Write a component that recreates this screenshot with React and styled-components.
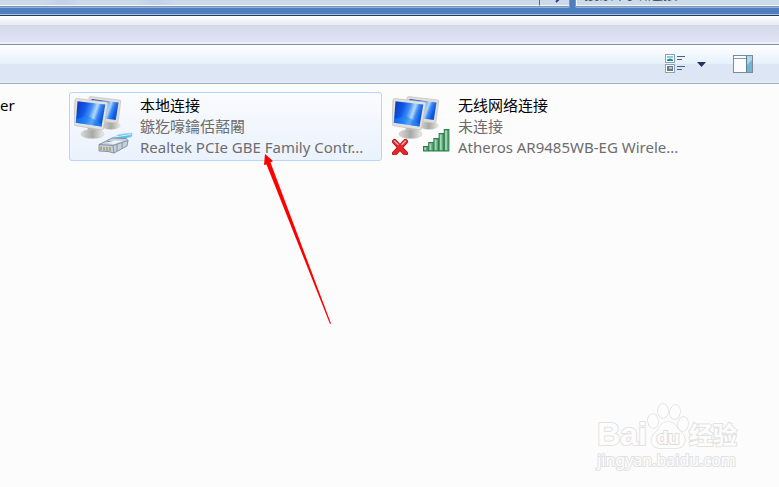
import { useId } from 'react';
import styled, { createGlobalStyle } from 'styled-components';

const connections = [
  {
    id: 'lan',
    name: '本地连接',
    status: '鏃犵嚎鑰佸嚭闂',
    device: 'Realtek PCIe GBE Family Contr...',
    active: true,
  },
  {
    id: 'wifi',
    name: '无线网络连接',
    status: '未连接',
    device: 'Atheros AR9485WB-EG Wirele...',
    active: false,
  },
];

const GlobalStyle = createGlobalStyle`
  * {
    box-sizing: border-box;
  }
  body {
    margin: 0;
    background: #fcfcfc;
    font-family: 'Noto Sans', 'Noto Sans CJK SC', sans-serif;
    font-size: 15px;
  }
  button, input {
    font: inherit;
  }
`;

const Page = styled.div`
  position: relative;
  min-height: 100vh;
  overflow: hidden;
`;

const TitleBar = styled.header`
  display: flex;
  align-items: flex-end;
  gap: 5px;
  height: 16px;
  padding-bottom: 6px;
  overflow: hidden;
  background: #4e7dc0;
  border-bottom: 1px solid #293b52;
  box-shadow: inset 0 -1px #a4c1e4;
`;

const AddressBar = styled.div`
  flex: 1;
  display: flex;
  height: 26px;
  border: 1px solid #8196b4;
  border-left: 0;
  box-shadow: 0 1px #8fb1dc;
  background:
    radial-gradient(circle at 62px 22px, #b9c6e880, transparent 18px),
    radial-gradient(circle at 155px 22px, #b9c6e880, transparent 18px),
    #cbd9ea;
  border-bottom-right-radius: 2px;
  margin-bottom: 2px;
`;

const AddressInput = styled.input`
  flex: 1;
  min-width: 0;
  padding: 0 8px;
  border: 0;
  border-bottom: 1px solid #f4f8fc;
  background: transparent;
`;

const RefreshButton = styled.button`
  display: flex;
  align-items: flex-end;
  justify-content: center;
  width: 30px;
  padding: 0 0 2px 6px;
  border: 0;
  border-left: 1px solid #5d6c80;
  border-bottom: 1px solid #f4f8fc;
  background: transparent;
`;

const SearchInput = styled.input`
  width: 204px;
  height: 26px;
  margin-bottom: 2px;
  padding: 0 8px 2px;
  border: 1px solid #8196b4;
  border-right: 0;
  border-bottom-left-radius: 2px;
  background: #ccdbea;
  box-shadow: inset 1px -1px #f4f8fc, 0 1px #8fb1dc;
  line-height: 20px;

  &::placeholder {
    color: #4d5560;
    opacity: 1;
  }
`;

const MenuBar = styled.div`
  height: 29px;
  background: linear-gradient(#ffffff, #e6eaf2 9px, #d3d8eb 9px, #e0e4f4 26px, #e8f0fa 26px);
  border-bottom: 1px solid #8791a3;
`;

const Toolbar = styled.div`
  display: flex;
  align-items: center;
  justify-content: flex-end;
  height: 39px;
  padding-right: 26px;
  background: linear-gradient(#ffffff, #e5f1fb 19px, #dce6f4 19px, #dce6f4 36px, #e4eef9 37px);
  border-bottom: 1px solid #a0afc3;
`;

const ToolButton = styled.button`
  display: flex;
  margin-left: ${props => props.$gap}px;
  padding: 0;
  border: 0;
  background: transparent;
`;

const ConnectionList = styled.ul`
  display: flex;
  gap: 5px;
  margin: 0;
  padding: 8px 0;
  list-style-type: none;
`;

const ConnectionItem = styled.li`
  flex: none;
`;

const PreviousItem = styled.li`
  flex: none;
  width: 64px;
  padding-top: 3px;
  line-height: 21px;
`;

const ConnectionButton = styled.button`
  display: flex;
  gap: 6px;
  width: 313px;
  padding: 2px 4px;
  border: 1px solid ${props => (props.$active ? '#b8d6fb' : 'transparent')};
  border-radius: 3px;
  background: ${props => (props.$active ? 'linear-gradient(#fafbfd, #eaf2fd)' : 'transparent')};
  text-align: left;
`;

const ConnectionText = styled.span`
  display: flex;
  flex-direction: column;
  white-space: nowrap;
`;

const ConnectionLine = styled.span`
  line-height: 21px;
  color: ${props => (props.$strong ? '#000000' : '#6d6d6d')};
`;

const Arrow = styled.svg`
  position: absolute;
  top: 154px;
  left: 262px;
  pointer-events: none;
`;

const Watermark = styled.div`
  position: absolute;
  right: 42px;
  bottom: 17px;
  color: #fdfdfd;
  font-weight: 700;
  -webkit-text-stroke: 2px #e2e2e2;
  paint-order: stroke fill;
  white-space: nowrap;
`;

const WatermarkLogo = styled.div`
  display: flex;
  align-items: flex-end;
  height: 46px;
`;

const WatermarkWord = styled.span`
  font-family: ${props => (props.$cjk ? "'Noto Sans CJK SC'" : "'Liberation Sans'")}, sans-serif;
  font-size: ${props => (props.$cjk ? 24 : 32)}px;
  line-height: 32px;
`;

const WatermarkUrl = styled.div`
  font-size: 16px;
  line-height: 20px;
  font-weight: 400;
`;

const Paw = styled.svg`
  display: block;
  flex: none;
`;

function Computers() {
  const id = useId();
  return (
    <>
      <defs>
        <linearGradient id={`${id}screen`} x1="0" y1="0" x2="1" y2="0.3">
          <stop offset="0" stopColor="#0a36b4" />
          <stop offset="0.35" stopColor="#1257e6" />
          <stop offset="0.55" stopColor="#3f8bf6" />
          <stop offset="0.72" stopColor="#b4dafd" />
          <stop offset="0.84" stopColor="#3b86f2" />
          <stop offset="1" stopColor="#0a55e0" />
        </linearGradient>
        <linearGradient id={`${id}stand`} x1="0" y1="0" x2="1" y2="0">
          <stop offset="0" stopColor="#d8d8d6" />
          <stop offset="0.5" stopColor="#a8a8a6" />
          <stop offset="1" stopColor="#eeeeec" />
        </linearGradient>
      </defs>
      <ellipse cx="37" cy="30.5" rx="10" ry="4" fill={`url(#${id}stand)`} />
      <path d="M15 2.5 16 1.5 46 5 46.8 6 44 27 42.5 28 17 25Z" fill="#deddd9" stroke="#c4c3bf" strokeWidth="0.7" />
      <path d="M17.5 4 44.5 7.5 41.8 25 19 22Z" fill={`url(#${id}screen)`} />
      <path d="M14 33h10l2 6H12Z" fill="#b5b5b3" />
      <ellipse cx="18.5" cy="39" rx="11.5" ry="4.5" fill={`url(#${id}stand)`} stroke="#c6c6c4" strokeWidth="0.6" />
      <path d="M1 4.5 2.5 3.5 33 7 34 8.5 29.5 34 28 35 0.8 30.5 0 29Z" fill="#e3e2de" stroke="#bbbab6" strokeWidth="0.7" />
      <path d="M3.5 6.3 31.3 9.5 27.5 31.5 1.8 27.7Z" fill={`url(#${id}screen)`} />
      <path d="M2 24 14 21 28 29 27.5 31.5 1.8 27.7Z" fill="#1f86f5" opacity="0.6" />
    </>
  );
}

function LanIcon() {
  return (
    <svg width="60" height="60" viewBox="0 0 60 60" aria-hidden="true">
      <Computers />
      <path d="M38 43 45 39.5 58 38v3.5L53 43 50 46Z" fill="#58bfe2" stroke="#a7dcee" strokeWidth="0.8" />
      <path d="M40 42 57 39.5" stroke="#d5f1fa" />
      <path d="M25 49.5 38 43 52 43.5 54 45.5 53 51 40 58 34 56.5 25 56Z" fill="#c7cfdb" stroke="#7c8aa1" strokeWidth="0.9" />
      <path d="M25 49.5 39 50.5 54 45.5M39 50.5 40 58M33 46.5l12 .5M43 49v7M48 47.5v6" fill="none" stroke="#7c8aa1" strokeWidth="0.9" />
      <path d="M27 51.5v3.5M30 52v3.5M33 52v4M36 52v4" stroke="#a09b58" strokeWidth="1.4" />
      <path d="M32 48 41 45.5 49 46 40 49Z" fill="#f2f5fa" />
    </svg>
  );
}

function WifiIcon() {
  const bars = [51, 47, 43, 38, 34];
  return (
    <svg width="60" height="60" viewBox="0 0 60 60" aria-hidden="true">
      <Computers />
      <path d="M2.5 46.5 13.5 58.5M13.5 46.5 2.5 58.5" stroke="#b81318" strokeWidth="5" strokeLinecap="round" />
      <path d="M2.5 46.5 13.5 58.5M13.5 46.5 2.5 58.5" stroke="#e5252a" strokeWidth="3.4" strokeLinecap="round" />
      <path d="M2.5 46 6 49.5M13.5 46 10 49.5" stroke="#f2a4a4" strokeWidth="1.6" strokeLinecap="round" />
      {bars.map((top, i) => (
        <g key={top}>
          <rect x={31.5 + i * 5.2} y={top + 0.5} width="4.6" height={55.5 - top} fill="#58a878" stroke="#2f7c4d" />
          <rect x={32.3 + i * 5.2} y={top + 1.5} width="1.8" height={53.5 - top} fill="#a6d6b4" />
        </g>
      ))}
    </svg>
  );
}

function ViewsIcon() {
  return (
    <svg width="20" height="20" viewBox="0 0 20 20" aria-hidden="true">
      <rect x="0.5" y="0.5" width="9" height="8" fill="#ffffff" stroke="#8ea0b8" />
      <path d="M2 2h6v2H2Z" fill="#83cdea" />
      <path d="M2 5.5 5 4.5 8 5.5V7H2Z" fill="#238c86" />
      <rect x="0.5" y="10.5" width="9" height="8" fill="#ffffff" stroke="#8ea0b8" />
      <path d="M2 12h6v5H2Z" fill="#5b76cf" />
      <path d="M2 14.5h3V17H2Z" fill="#3f9a3c" />
      <path d="M4 13h3v2H4Z" fill="#e6c631" />
      <path d="M12 2.5h8M12 5.5h5M12 12.5h8M12 15.5h5" stroke="#4c5f7c" />
    </svg>
  );
}

function PaneIcon() {
  return (
    <svg width="20" height="18" viewBox="0 0 20 18" aria-hidden="true">
      <rect x="0.5" y="0.5" width="19" height="17" fill="#fbfcfd" stroke="#7d8998" />
      <path d="M1 3.5h13" stroke="#8c98a8" />
      <rect x="14" y="1" width="5" height="16" fill="#6fb6d5" />
      <path d="M14 1h5v4l-5 5Z" fill="#a9d8e8" />
      <path d="M13.5 1v16" stroke="#5e7d94" />
    </svg>
  );
}

function App() {
  return (
    <Page>
      <GlobalStyle />
      <TitleBar>
        <AddressBar>
          <AddressInput aria-label="地址" />
          <RefreshButton aria-label="刷新">
            <svg width="8" height="8" viewBox="0 0 8 8">
              <path d="M5 0v4L2 7" fill="none" stroke="#24457c" strokeWidth="2" />
            </svg>
          </RefreshButton>
        </AddressBar>
        <SearchInput aria-label="搜索" placeholder="搜索 网络连接" />
      </TitleBar>
      <MenuBar />
      <Toolbar>
        <ToolButton aria-label="更改您的视图">
          <ViewsIcon />
        </ToolButton>
        <ToolButton $gap={12} aria-label="更多选项">
          <svg width="9" height="5" viewBox="0 0 9 5">
            <path d="M0 0h9L4.5 5Z" fill="#1c355e" />
          </svg>
        </ToolButton>
        <ToolButton $gap={27} aria-label="显示预览窗格">
          <PaneIcon />
        </ToolButton>
      </Toolbar>

      <ConnectionList>
        <PreviousItem>er</PreviousItem>
        {connections.map(el => (
          <ConnectionItem key={el.id}>
            <ConnectionButton $active={el.active}>
              {el.id === 'lan' ? <LanIcon /> : <WifiIcon />}
              <ConnectionText>
                <ConnectionLine $strong>{el.name}</ConnectionLine>
                <ConnectionLine>{el.status}</ConnectionLine>
                <ConnectionLine>{el.device}</ConnectionLine>
              </ConnectionText>
            </ConnectionButton>
          </ConnectionItem>
        ))}
      </ConnectionList>

      <Arrow width="70" height="171" viewBox="0 0 70 171" aria-hidden="true">
        <path d="M3 0 11 7 8.5 8.5 69 169.5 68 170 4.5 10.5 2 11Z" fill="#ff0000" />
      </Arrow>

      <Watermark>
        <WatermarkLogo>
          <WatermarkWord>Bai</WatermarkWord>
          <Paw width="42" height="48" viewBox="0 0 42 48">
            <g fill="#fdfdfd" stroke="#e0e0e0" strokeWidth="1.5">
              <ellipse cx="6" cy="19" rx="5" ry="7" transform="rotate(-8 6 19)" />
              <ellipse cx="16" cy="9" rx="5" ry="7" />
              <ellipse cx="28" cy="10" rx="5" ry="7" transform="rotate(10 28 10)" />
              <ellipse cx="36" cy="22" rx="5" ry="7" transform="rotate(8 36 22)" />
              <path d="M21 20c7 0 9 6 13 10s5 9 2 13-8 3-15 3-12 1-15-3-1-9 3-13 5-10 12-10Z" />
            </g>
            <text
              x="21"
              y="42"
              textAnchor="middle"
              fontFamily="Liberation Sans, sans-serif"
              fontSize="19"
              fill="#fdfdfd"
              stroke="#dcdcdc"
              strokeWidth="2"
              paintOrder="stroke"
            >
              du
            </text>
          </Paw>
          <WatermarkWord $cjk>经验</WatermarkWord>
        </WatermarkLogo>
        <WatermarkUrl>jingyan.baidu.com</WatermarkUrl>
      </Watermark>
    </Page>
  );
}

export default App;
